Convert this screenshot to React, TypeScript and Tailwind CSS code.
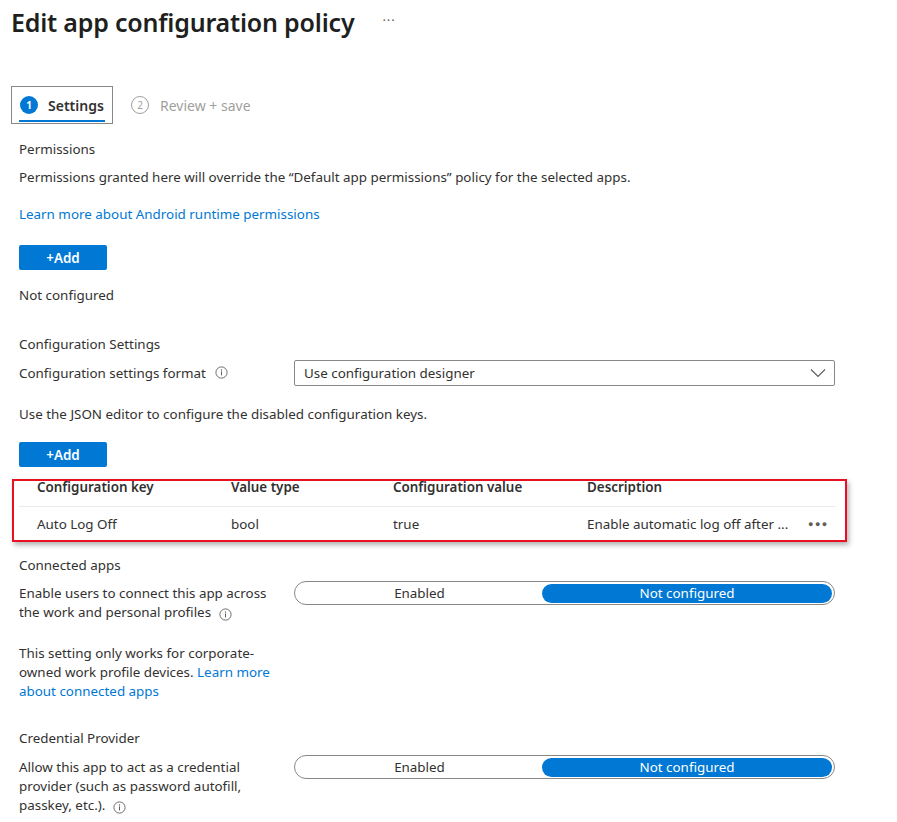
import React from "react";

const font = { fontFamily: '"Segoe UI", "Noto Sans", "Open Sans", Arial, sans-serif' };

function InfoIcon() {
  return (
    <svg width="13" height="13" viewBox="0 0 13 13" className="inline-block">
      <circle cx="6.5" cy="6.5" r="5.6" fill="none" stroke="#605e5c" strokeWidth="0.9" />
      <circle cx="6.5" cy="4" r="0.7" fill="#605e5c" />
      <rect x="6" y="5.4" width="1" height="4" fill="#605e5c" />
    </svg>
  );
}

function Chevron() {
  return (
    <svg width="16" height="10" viewBox="0 0 16 10">
      <path d="M1 1.5 L8 8.5 L15 1.5" fill="none" stroke="#605e5c" strokeWidth="1.2" />
    </svg>
  );
}

function AddButton() {
  return (
    <button className="w-[88px] h-[25px] bg-[#0078d4] text-white text-[13.4px] font-semibold rounded-[2px] leading-[24px]">
      +Add
    </button>
  );
}

function Toggle() {
  return (
    <div className="w-[541px] h-[24px] rounded-full border border-[#8a8886] flex items-center p-[2px] text-[13.4px]">
      <div className="flex-1 text-center text-[#323130] leading-[18px]">Enabled</div>
      <div className="w-[290px] h-[19px] rounded-full bg-[#0078d4] text-white text-center leading-[18px]">
        Not configured
      </div>
    </div>
  );
}

export default function App() {
  return (
    <div className="w-[897px] h-[822px] bg-white text-[#323130] text-[13.4px] overflow-hidden" style={font}>
      {/* Header */}
      <div className="pl-[11px] pt-[6px] flex items-center">
        <h1 className="text-[25px] leading-[32px] font-semibold text-[#201f1e] tracking-[-0.2px]">
          Edit app configuration policy
        </h1>
        <span className="ml-[28px] text-[#605e5c] text-[13px] leading-[10px] tracking-[1px] -mt-[4px]">···</span>
      </div>

      {/* Wizard steps */}
      <div className="pl-[11px] mt-[48px] flex items-center">
        <div className="w-[102px] h-[38px] border border-[#8a8886] flex items-center pl-[8px] relative">
          <span className="w-[18px] h-[18px] rounded-full bg-[#0078d4] text-white text-[10px] font-bold flex items-center justify-center">
            1
          </span>
          <span className="ml-[10px] font-semibold text-[#323130] text-[14px]">Settings</span>
          <span className="absolute left-[7px] right-[7px] bottom-[1px] h-[2px] bg-[#0078d4]" />
        </div>
        <div className="ml-[18px] flex items-center text-[#a19f9d]">
          <span className="w-[18px] h-[18px] rounded-full border border-[#a19f9d] text-[10px] flex items-center justify-center">
            2
          </span>
          <span className="ml-[11px] text-[14px]">Review + save</span>
        </div>
      </div>

      <div className="pl-[19px]">
        {/* Permissions */}
        <div className="mt-[15px] leading-[20px]">Permissions</div>
        <div className="mt-[8px] leading-[20px]">
          Permissions granted here will override the “Default app permissions” policy for the selected apps.
        </div>
        <div className="mt-[17px] leading-[20px] text-[#0078d4]">Learn more about Android runtime permissions</div>
        <div className="mt-[21px]">
          <AddButton />
        </div>
        <div className="mt-[15px] leading-[20px]">Not configured</div>

        {/* Configuration settings */}
        <div className="mt-[29px] leading-[20px]">Configuration Settings</div>
        <div className="mt-[6px] flex items-center h-[26px]">
          <div className="w-[275px] flex items-center gap-[9px]">
            <span>Configuration settings format</span>
            <InfoIcon />
          </div>
          <div className="w-[541px] h-[26px] border border-[#8a8886] rounded-[2px] flex items-center justify-between pl-[9px] pr-[8px]">
            <span>Use configuration designer</span>
            <Chevron />
          </div>
        </div>
        <div className="mt-[18px] leading-[20px]">Use the JSON editor to configure the disabled configuration keys.</div>
        <div className="mt-[18px]">
          <AddButton />
        </div>

        {/* Configuration key table */}
        <div className="mt-[12px] -ml-[7px] w-[835px] h-[63px] border-2 border-[#e81123] shadow-[2px_3px_5px_rgba(0,0,0,0.3)] overflow-hidden">
          <div className="h-[25px] flex items-start pl-[23px] font-semibold leading-[12px]">
            <span className="w-[194px]">Configuration key</span>
            <span className="w-[162px]">Value type</span>
            <span className="w-[194px]">Configuration value</span>
            <span>Description</span>
          </div>
          <div className="ml-[5px] mr-[9px] h-px bg-[#edebe9]" />
          <div className="h-[33px] flex items-center pl-[23px] leading-[20px]">
            <span className="w-[194px]">Auto Log Off</span>
            <span className="w-[162px]">bool</span>
            <span className="w-[194px]">true</span>
            <span className="w-[221px]">Enable automatic log off after ...</span>
            <span className="text-[#605e5c] text-[9px] tracking-[1.5px]">●●●</span>
          </div>
        </div>

        {/* Connected apps */}
        <div className="mt-[13px] leading-[20px]">Connected apps</div>
        <div className="mt-[6px] flex items-start">
          <div className="w-[275px] pt-[3px] leading-[19px]">
            Enable users to connect this app across
            <br />
            the work and personal profiles <span className="ml-[4px] align-[-1px]"><InfoIcon /></span>
          </div>
          <Toggle />
        </div>
        <div className="mt-[21px] leading-[19px]">
          This setting only works for corporate-
          <br />
          owned work profile devices. <span className="text-[#0078d4]">Learn more</span>
          <br />
          <span className="text-[#0078d4]">about connected apps</span>
        </div>

        {/* Credential provider */}
        <div className="mt-[27px] leading-[20px]">Credential Provider</div>
        <div className="mt-[7px] flex items-start">
          <div className="w-[275px] pt-[3px] leading-[19px]">
            Allow this app to act as a credential
            <br />
            provider (such as password autofill,
            <br />
            passkey, etc.). <span className="ml-[4px] align-[-1px]"><InfoIcon /></span>
          </div>
          <Toggle />
        </div>
      </div>
    </div>
  );
}
